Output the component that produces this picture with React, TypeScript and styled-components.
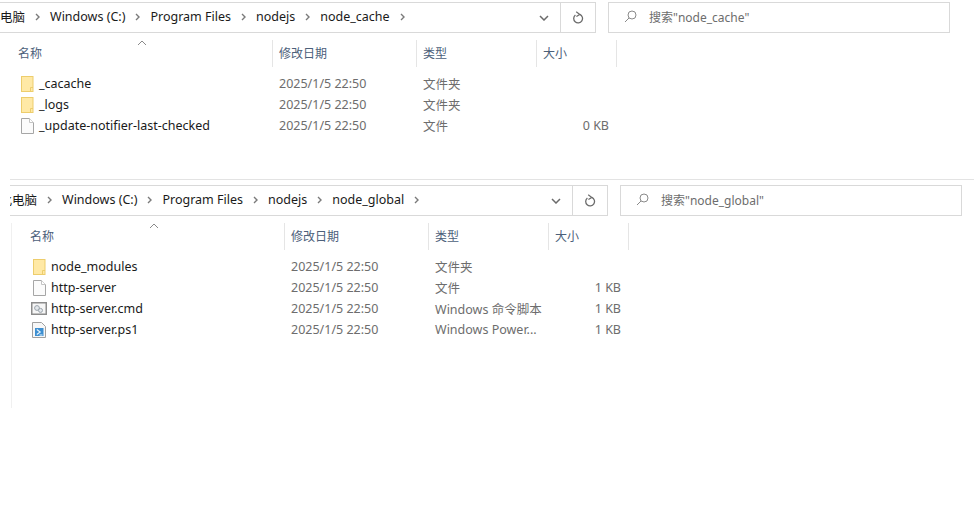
import styled, { createGlobalStyle } from 'styled-components'

const GlobalStyle = createGlobalStyle`
  html, body {
    margin: 0;
    padding: 0;
    background: #ffffff;
    overflow: hidden;
  }
  body {
    font-family: "Noto Sans", "Noto Sans CJK SC", sans-serif;
    font-size: 12.5px;
  }
`

const COLUMNS = '273px 144px 120px 80px'

const Page = styled.div`
  width: 977px;
  height: 511px;
  padding-top: 2px;
  box-sizing: border-box;
  overflow: hidden;
`

const Panel = styled.section<{ $left: number }>`
  margin-left: ${(p) => p.$left}px;
`

const Divider = styled.div`
  width: 964px;
  height: 1px;
  margin: 43px 0 5px 10px;
  background: #e3e3e3;
`

const Toolbar = styled.div`
  display: flex;
  gap: 12px;
`

const AddressBar = styled.div<{ $width: number }>`
  display: flex;
  align-items: center;
  width: ${(p) => p.$width}px;
  height: 31px;
  box-sizing: border-box;
  border: 2px solid #d9d9d9;
  border-width: 1.5px 1.5px 1.5px 0;
  overflow: hidden;
`

const Crumbs = styled.div`
  flex: 1;
  display: flex;
  align-items: center;
  padding-bottom: 3px;
  overflow: hidden;
  white-space: nowrap;
  color: #1a1a1a;
`

const CrumbItem = styled.span`
  display: contents;
`

const Crumb = styled.span<{ $shift?: number }>`
  flex: none;
  margin-left: ${(p) => p.$shift ?? 0}px;
`

const CrumbArrow = styled.svg`
  flex: none;
  width: 5px;
  height: 8px;
  margin: 2px 10px 0 10px;
`

const DropButton = styled.div`
  flex: none;
  width: 32px;
  height: 100%;
  display: flex;
  align-items: center;
  justify-content: center;
`

const RefreshButton = styled.div`
  flex: none;
  width: 34px;
  height: 100%;
  display: flex;
  align-items: center;
  justify-content: center;
  border-left: 1px solid #d9d9d9;
`

const SearchBox = styled.div`
  display: flex;
  align-items: center;
  gap: 12px;
  width: 342px;
  height: 31px;
  box-sizing: border-box;
  padding: 0 0 2px 15px;
  border: 1.5px solid #d9d9d9;
  font-size: 12px;
  color: #6d6d6d;
`

const FileList = styled.div<{ $rule?: boolean }>`
  margin-top: 7px;
  margin-left: ${(p) => (p.$rule ? 1 : 0)}px;
  border-left: ${(p) => (p.$rule ? '1px solid #f0f0f0' : 'none')};
  min-height: ${(p) => (p.$rule ? 185 : 96)}px;
  width: fit-content;
`

const HeaderRow = styled.div`
  position: relative;
  display: grid;
  grid-template-columns: ${COLUMNS};
  height: 27px;
  margin-bottom: 6px;
`

const HeaderCell = styled.div<{ $inset?: number }>`
  display: flex;
  align-items: center;
  padding: 0 0 2px ${(p) => p.$inset ?? 6}px;
  border-right: 1px solid #e5e5e5;
  box-sizing: border-box;
  font-size: 12px;
  color: #4c607a;
`

const SortArrow = styled.svg`
  position: absolute;
  left: 137px;
  top: 0;
  width: 10px;
  height: 6px;
`

const Row = styled.div`
  display: grid;
  grid-template-columns: ${COLUMNS};
  height: 21px;
  align-items: center;
`

const NameCell = styled.div`
  display: flex;
  align-items: center;
  height: 100%;
  padding-left: 21px;
  color: #1a1a1a;
`

const IconSlot = styled.span`
  flex: none;
  width: 18px;
  height: 16px;
  display: flex;
  align-items: center;
`

const MetaCell = styled.div`
  padding-left: 6px;
  color: #6d6d6d;
  white-space: nowrap;
`

const SizeCell = styled.div`
  padding-right: 8px;
  text-align: right;
  color: #6d6d6d;
`

const Folder = () => (
  <svg width="13" height="16" viewBox="0 0 13 16">
    <rect x="0.5" y="0.5" width="11.5" height="15" fill="#ffe9a6" stroke="#edcd6c" />
    <path d="M9.5 15.5V11.5H12" fill="none" stroke="#edcd6c" />
  </svg>
)

const Doc = () => (
  <svg width="13" height="16" viewBox="0 0 13 16">
    <path d="M.5.5H8.5L12.5 4.5V15.5H.5Z" fill="#fbfbfb" stroke="#a6a6a6" />
    <path d="M8.5.5V4.5H12.5" fill="#fff" stroke="#c4c4c4" />
  </svg>
)

const CmdFile = () => (
  <svg width="16" height="13" viewBox="0 0 16 13" style={{ marginLeft: -2 }}>
    <rect x="0.75" y="0.75" width="14.5" height="11.5" fill="#f6f6f6" stroke="#8c8c8c" strokeWidth="1.5" />
    <circle cx="6" cy="6" r="2.4" fill="#e4e8ec" stroke="#9aa3ab" />
    <circle cx="9.5" cy="8.4" r="2" fill="#e4e8ec" stroke="#9aa3ab" />
  </svg>
)

const PsFile = () => (
  <svg width="14" height="16" viewBox="0 0 14 16" style={{ marginLeft: -1 }}>
    <path d="M.5.5H9.5L13.5 4.5V15.5H.5Z" fill="#f7f7f7" stroke="#a0a0a0" />
    <rect x="3" y="6" width="8.5" height="8" fill="#3d8fd1" />
    <path d="M4.8 7.5L8.2 10L4.8 12.5" fill="none" stroke="#e8f3fb" strokeWidth="1.2" />
    <path d="M7.5 13H10.5" stroke="#e8f3fb" />
  </svg>
)

type Kind = 'folder' | 'doc' | 'cmd' | 'ps'

const icons: Record<Kind, () => React.JSX.Element> = {
  folder: Folder,
  doc: Doc,
  cmd: CmdFile,
  ps: PsFile,
}

type Entry = { name: string; kind: Kind; type: string; size?: string }

const DATE = '2025/1/5 22:50'

const cacheEntries: Entry[] = [
  { name: '_cacache', kind: 'folder', type: '文件夹' },
  { name: '_logs', kind: 'folder', type: '文件夹' },
  { name: '_update-notifier-last-checked', kind: 'doc', type: '文件', size: '0 KB' },
]

const globalEntries: Entry[] = [
  { name: 'node_modules', kind: 'folder', type: '文件夹' },
  { name: 'http-server', kind: 'doc', type: '文件', size: '1 KB' },
  { name: 'http-server.cmd', kind: 'cmd', type: 'Windows 命令脚本', size: '1 KB' },
  { name: 'http-server.ps1', kind: 'ps', type: 'Windows Power...', size: '1 KB' },
]

const Explorer = ({ folder, entries, width, left, crumbShift, rule }: {
  folder: string
  entries: Entry[]
  width: number
  left: number
  crumbShift: number
  rule?: boolean
}) => (
  <Panel $left={left}>
    <Toolbar>
      <AddressBar $width={width}>
        <Crumbs>
          {['此电脑', 'Windows (C:)', 'Program Files', 'nodejs', folder].map((label, i) => (
            <CrumbItem key={label}>
              <Crumb $shift={i === 0 ? crumbShift : 0}>{label}</Crumb>
              <CrumbArrow viewBox="0 0 5 8">
                <path d="M1 1L4 4L1 7" fill="none" stroke="#7a7a7a" strokeWidth="1.4" />
              </CrumbArrow>
            </CrumbItem>
          ))}
        </Crumbs>
        <DropButton>
          <svg width="10" height="6" viewBox="0 0 10 6">
            <path d="M1 1L5 5L9 1" fill="none" stroke="#6b6b6b" strokeWidth="1.5" />
          </svg>
        </DropButton>
        <RefreshButton>
          <svg width="11" height="13" viewBox="0 0 11 13">
            <path d="M6.8 3.4A4.4 4.4 0 1 1 2.4 4" fill="none" stroke="#6b6b6b" strokeWidth="1.3" />
            <path d="M3.2 .8L6.8 3.4L3.4 5.6" fill="none" stroke="#6b6b6b" strokeWidth="1.2" />
          </svg>
        </RefreshButton>
      </AddressBar>
      <SearchBox>
        <svg width="13" height="13" viewBox="0 0 13 13">
          <circle cx="8" cy="5" r="4" fill="none" stroke="#8a8a8a" />
          <path d="M5 8L1 12" stroke="#8a8a8a" />
        </svg>
        搜索"{folder}"
      </SearchBox>
    </Toolbar>
    <FileList $rule={rule}>
      <HeaderRow>
        <SortArrow viewBox="0 0 10 6">
          <path d="M1 5L5 1L9 5" fill="none" stroke="#8a8a8a" />
        </SortArrow>
        <HeaderCell $inset={18}>名称</HeaderCell>
        <HeaderCell>修改日期</HeaderCell>
        <HeaderCell>类型</HeaderCell>
        <HeaderCell>大小</HeaderCell>
      </HeaderRow>
      {entries.map((entry) => {
        const Icon = icons[entry.kind]
        return (
          <Row key={entry.name}>
            <NameCell>
              <IconSlot>
                <Icon />
              </IconSlot>
              {entry.name}
            </NameCell>
            <MetaCell>{DATE}</MetaCell>
            <MetaCell>{entry.type}</MetaCell>
            <SizeCell>{entry.size}</SizeCell>
          </Row>
        )
      })}
    </FileList>
  </Panel>
)

export default function App() {
  return (
    <>
      <GlobalStyle />
      <Page>
        <Explorer folder="node_cache" entries={cacheEntries} width={596} left={0} crumbShift={-12.5} />
        <Divider />
        <Explorer folder="node_global" entries={globalEntries} width={598} left={10} crumbShift={-10.5} rule />
      </Page>
    </>
  )
}
